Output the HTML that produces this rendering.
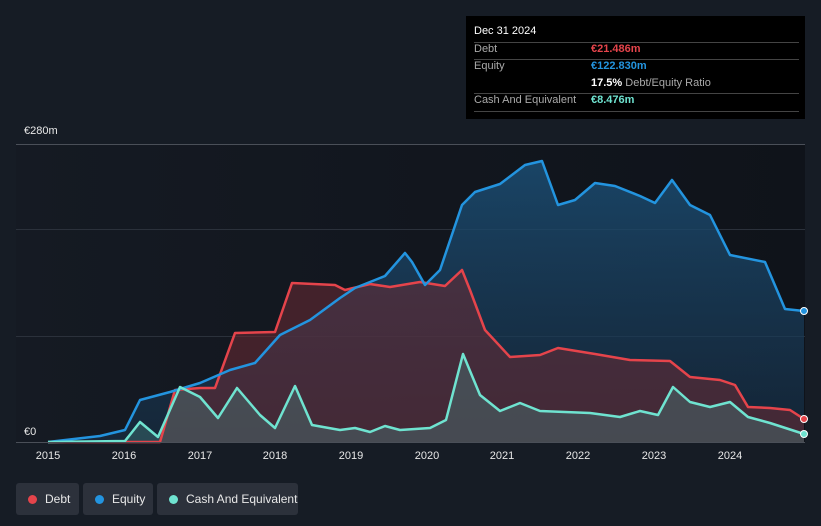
<!DOCTYPE html>
<html><head><meta charset="utf-8"><style>
body{margin:0;width:821px;height:526px;background:#161c25;font-family:"Liberation Sans",sans-serif;overflow:hidden;position:relative}
.tt{position:absolute;left:466px;top:16px;width:339px;height:103px;background:#000;color:#fff;font-size:11px}
.tt .r{position:absolute;left:8px;right:6px;border-top:1px solid #444}
.tt span{position:absolute}
.lg{position:absolute;top:483px;height:32px;background:#2c313b;border-radius:3px;color:#e8e8e8;font-size:12px;line-height:32px}
.lg i{display:inline-block;width:9px;height:9px;border-radius:50%;margin:0 8px 0 12px;vertical-align:-1px}
.ax{position:absolute;top:450px;color:#e8e8e8;font-size:11px;transform:translateX(-50%)}
</style></head><body>
<svg width="821" height="526" style="position:absolute;left:0;top:0">
<defs>
<linearGradient id="bg" x1="0" x2="1"><stop offset="0" stop-color="#151a23"/><stop offset="1" stop-color="#0f131a"/></linearGradient>
<linearGradient id="eq" x1="0" y1="0" x2="0" y2="1"><stop offset="0" stop-color="#1b4d73" stop-opacity=".85"/><stop offset="1" stop-color="#173048" stop-opacity=".6"/></linearGradient>
</defs>
<rect x="16" y="144" width="789" height="298" fill="url(#bg)"/>
<g stroke="#2b313b" stroke-width="1"><line x1="16" y1="229.5" x2="805" y2="229.5"/><line x1="16" y1="336.5" x2="805" y2="336.5"/></g>
<line x1="16" y1="144.5" x2="805" y2="144.5" stroke="#4a4f58"/>
<path d="M48,442 L100,436 L125,430 L140,400 L170,392 L200,383 L230,370 L255,363 L280,335 L310,320 L340,298 L355,288 L385,276 L405,253 L412,262 L425,285 L440,270 L462,205 L475,192 L500,184 L525,165 L542,161 L558,205 L575,200 L595,183 L615,186 L640,196 L655,203 L672,180 L690,205 L710,215 L730,255 L765,262 L785,309 L804,311 L804,442 Z" fill="url(#eq)"/>
<path d="M48,442 L160,442 L175,390 L200,388 L215,388 L235,333 L275,332 L292,283 L335,285 L345,290 L370,284 L390,287 L420,282 L445,286 L462,270 L470,290 L485,330 L510,357 L540,355 L558,348 L595,354 L630,360 L670,361 L690,377 L720,380 L735,385 L748,407 L770,408 L790,410 L804,419 L804,442 Z" fill="#6b2c34" fill-opacity=".55"/>
<path d="M48,442 L125,441 L140,422 L158,437 L180,387 L200,397 L218,418 L237,388 L260,415 L275,428 L295,386 L312,425 L340,430 L355,428 L370,432 L385,426 L400,430 L430,428 L446,420 L463,354 L480,395 L500,411 L520,403 L540,411 L590,413 L620,417 L640,411 L658,415 L673,387 L690,402 L710,407 L730,402 L748,417 L770,423 L804,434 L804,442 Z" fill="#4a8a88" fill-opacity=".35"/>
<g fill="none" stroke-width="2.5" stroke-linejoin="round">
<path d="M48,442 L160,442 L175,390 L200,388 L215,388 L235,333 L275,332 L292,283 L335,285 L345,290 L370,284 L390,287 L420,282 L445,286 L462,270 L470,290 L485,330 L510,357 L540,355 L558,348 L595,354 L630,360 L670,361 L690,377 L720,380 L735,385 L748,407 L770,408 L790,410 L804,419" stroke="#e5444b"/>
<path d="M48,442 L100,436 L125,430 L140,400 L170,392 L200,383 L230,370 L255,363 L280,335 L310,320 L340,298 L355,288 L385,276 L405,253 L412,262 L425,285 L440,270 L462,205 L475,192 L500,184 L525,165 L542,161 L558,205 L575,200 L595,183 L615,186 L640,196 L655,203 L672,180 L690,205 L710,215 L730,255 L765,262 L785,309 L804,311" stroke="#2394df"/>
<path d="M48,442 L125,441 L140,422 L158,437 L180,387 L200,397 L218,418 L237,388 L260,415 L275,428 L295,386 L312,425 L340,430 L355,428 L370,432 L385,426 L400,430 L430,428 L446,420 L463,354 L480,395 L500,411 L520,403 L540,411 L590,413 L620,417 L640,411 L658,415 L673,387 L690,402 L710,407 L730,402 L748,417 L770,423 L804,434" stroke="#6fe3d0"/>
</g>
<line x1="16" y1="442.5" x2="805" y2="442.5" stroke="#4a4f58"/>
<circle cx="804" cy="311" r="3.5" fill="#2394df" stroke="#fff" stroke-width="1"/>
<circle cx="804" cy="419" r="3.5" fill="#e5444b" stroke="#fff" stroke-width="1"/>
<circle cx="804" cy="434" r="3.5" fill="#6fe3d0" stroke="#fff" stroke-width="1"/>
</svg>
<div style="position:absolute;left:24px;top:125px;color:#e8e8e8;font-size:11px">€280m</div>
<div style="position:absolute;left:24px;top:426px;color:#e8e8e8;font-size:11px">€0</div>
<div class="ax" style="left:48px">2015</div><div class="ax" style="left:124px">2016</div><div class="ax" style="left:200px">2017</div><div class="ax" style="left:275px">2018</div><div class="ax" style="left:351px">2019</div><div class="ax" style="left:427px">2020</div><div class="ax" style="left:502px">2021</div><div class="ax" style="left:578px">2022</div><div class="ax" style="left:654px">2023</div><div class="ax" style="left:730px">2024</div>
<div class="tt">
<span style="left:8px;top:9px">Dec 31 2024</span>
<div class="r" style="top:26px"></div>
<span style="left:8px;top:27px;color:#aaa">Debt</span><span style="left:125px;top:27px;color:#e5444b;font-weight:bold">€21.486m</span>
<div class="r" style="top:43px"></div>
<span style="left:8px;top:44px;color:#aaa">Equity</span><span style="left:125px;top:44px;color:#2394df;font-weight:bold">€122.830m</span>
<span style="left:125px;top:61px"><b>17.5%</b> <span style="position:static;color:#aaa">Debt/Equity Ratio</span></span>
<div class="r" style="top:77px"></div>
<span style="left:8px;top:78px;color:#aaa">Cash And Equivalent</span><span style="left:125px;top:78px;color:#6fe3d0;font-weight:bold">€8.476m</span>
<div class="r" style="top:95px"></div>
</div>
<div class="lg" style="left:16px;width:63px"><i style="background:#e5444b"></i>Debt</div>
<div class="lg" style="left:83px;width:70px"><i style="background:#2394df"></i>Equity</div>
<div class="lg" style="left:157px;width:141px"><i style="background:#6fe3d0"></i>Cash And Equivalent</div>
</body></html>
